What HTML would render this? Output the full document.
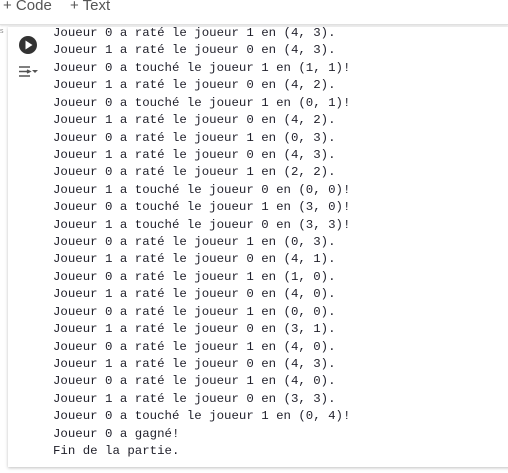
<!DOCTYPE html>
<html><head><style>
body{margin:0;width:508px;height:473px;background:#fff;position:relative;overflow:hidden;font-family:"Liberation Sans",sans-serif}
.top{position:absolute;left:0;top:0;width:508px;height:24px;background:#fff;border-bottom:1px solid #e0e0e0;box-shadow:0 1px 2px rgba(0,0,0,.12)}
.top .b{position:absolute;top:-3px;font-size:15px;color:#555}
.card{position:absolute;left:8px;top:27px;width:520px;height:440px;background:#fff;box-shadow:0 1px 3px rgba(0,0,0,.25)}
pre{position:absolute;left:53px;top:25px;margin:0;font-family:"Liberation Mono",monospace;font-size:12.4px;line-height:17.42px;color:#1f1f2a}
</style></head><body>
<div class="top"><span class="b" style="left:3px">+ Code</span><span class="b" style="left:70px">+ Text</span></div>
<div style="position:absolute;left:0;top:28px;width:4px;height:30px;font-size:7px;color:#888">s</div>
<div class="card"></div>
<svg style="position:absolute;left:18px;top:35px" width="20" height="20"><circle cx="10" cy="10" r="9" fill="#333"/><path d="M7.5 5.5L14.5 10L7.5 14.5Z" fill="#fff"/></svg>
<svg style="position:absolute;left:18px;top:64px" width="22" height="16"><path d="M1 3h11M1 12h11M9 6l3 1.5-3 1.5M1 7.5h11" stroke="#555" stroke-width="1.5" fill="none"/><path d="M14 6h6l-3 3z" fill="#555"/></svg>
<pre>Joueur 0 a raté le joueur 1 en (4, 3).
Joueur 1 a raté le joueur 0 en (4, 3).
Joueur 0 a touché le joueur 1 en (1, 1)!
Joueur 1 a raté le joueur 0 en (4, 2).
Joueur 0 a touché le joueur 1 en (0, 1)!
Joueur 1 a raté le joueur 0 en (4, 2).
Joueur 0 a raté le joueur 1 en (0, 3).
Joueur 1 a raté le joueur 0 en (4, 3).
Joueur 0 a raté le joueur 1 en (2, 2).
Joueur 1 a touché le joueur 0 en (0, 0)!
Joueur 0 a touché le joueur 1 en (3, 0)!
Joueur 1 a touché le joueur 0 en (3, 3)!
Joueur 0 a raté le joueur 1 en (0, 3).
Joueur 1 a raté le joueur 0 en (4, 1).
Joueur 0 a raté le joueur 1 en (1, 0).
Joueur 1 a raté le joueur 0 en (4, 0).
Joueur 0 a raté le joueur 1 en (0, 0).
Joueur 1 a raté le joueur 0 en (3, 1).
Joueur 0 a raté le joueur 1 en (4, 0).
Joueur 1 a raté le joueur 0 en (4, 3).
Joueur 0 a raté le joueur 1 en (4, 0).
Joueur 1 a raté le joueur 0 en (3, 3).
Joueur 0 a touché le joueur 1 en (0, 4)!
Joueur 0 a gagné!
Fin de la partie.</pre>
</body></html>
